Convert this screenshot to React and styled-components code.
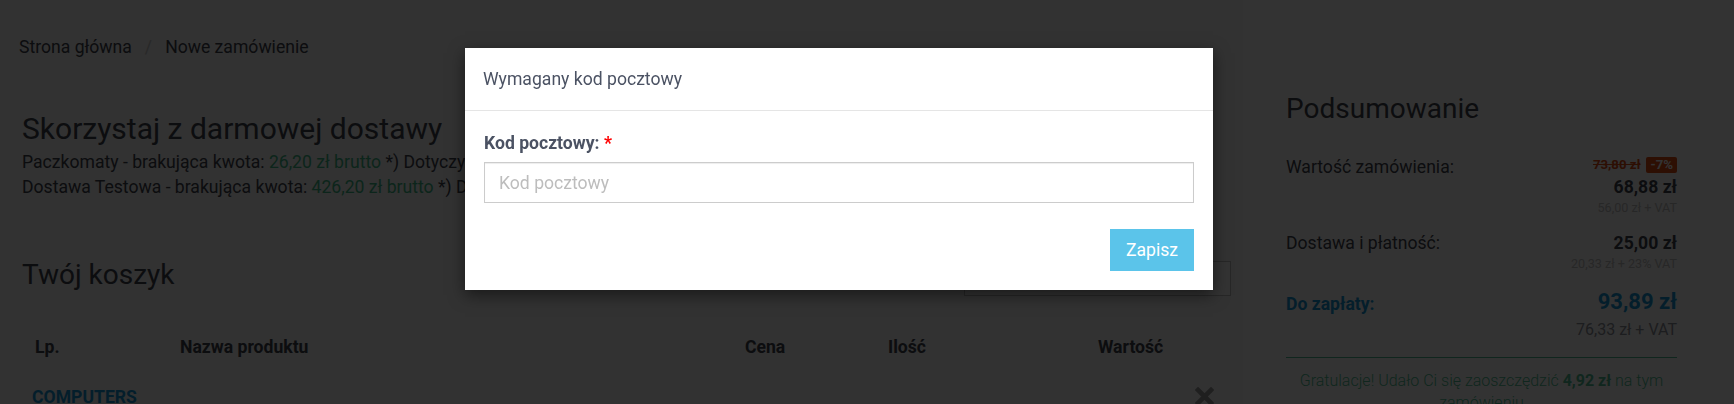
import React from "react";
import styled, { createGlobalStyle } from "styled-components";

const TEXT = "#3f434d";
const BLUE = "#1597d6";
const GREEN = "#3fb987";

const GlobalStyle = createGlobalStyle`
  * { box-sizing: border-box; }
  html, body { margin: 0; padding: 0; background: #fff; }
  body {
    font-family: Roboto, "Liberation Sans", Arial, sans-serif;
    font-size: 17.6px;
    color: ${TEXT};
    overflow: hidden;
  }
`;

const Page = styled.div`
  display: grid;
  grid-template-columns: 1243px 1fr;
  min-height: 404px;
`;

const Main = styled.main`
  background: #f8f8f8;
  padding: 35px 12px 0 22px;
  min-width: 0;
`;

const Breadcrumb = styled.nav`
  display: flex;
  align-items: center;
  line-height: 24px;
  margin-left: -3px;
  color: ${TEXT};
`;

const CrumbSep = styled.span`
  color: #c8c8c8;
  padding: 0 13px;
`;

const PromoTitle = styled.h2`
  margin: 52px 0 3px;
  font-size: 30px;
  line-height: 36px;
  font-weight: 400;
  color: ${TEXT};
`;

const PromoLine = styled.p`
  margin: 0;
  line-height: 25px;
  white-space: nowrap;
`;

const Amount = styled.span`
  color: ${GREEN};
`;

const CartHead = styled.div`
  display: flex;
  justify-content: space-between;
  align-items: flex-start;
  margin-top: 58px;
`;

const CartTitle = styled.h2`
  margin: 0;
  font-size: 28px;
  line-height: 34px;
  font-weight: 400;
  color: ${TEXT};
`;

const CodeInput = styled.input`
  width: 267px;
  height: 35px;
  margin-top: 3px;
  border: 1px solid #c4c4c4;
  background: #fff;
  font: inherit;
`;

const CartTable = styled.div`
  display: grid;
  grid-template-columns: 145px 565px 143px 210px 1fr;
  margin-top: 31px;
`;

const Th = styled.div`
  padding: 8px 13px;
  font-weight: 700;
  line-height: 24px;
  color: ${TEXT};
`;

const CategoryRow = styled.div`
  grid-column: 1 / -1;
  display: flex;
  justify-content: space-between;
  align-items: flex-start;
  padding: 18px 17px 0 10px;
`;

const Category = styled.span`
  font-weight: 700;
  line-height: 24px;
  color: ${BLUE};
  text-transform: uppercase;
`;

const RemoveButton = styled.button`
  margin-top: 2px;
  padding: 0;
  border: 0;
  background: none;
  width: 19px;
  height: 19px;
  display: block;
  color: #9a9a9a;
`;

const Summary = styled.aside`
  background: #fff;
  padding: 92px 57px 0 43px;
`;

const SummaryTitle = styled.h2`
  margin: 0 0 29px;
  font-size: 28px;
  line-height: 34px;
  font-weight: 400;
  color: ${TEXT};
`;

const SumRow = styled.div`
  display: flex;
  justify-content: space-between;
  align-items: flex-start;
  margin-bottom: 14px;
`;

const SumLabel = styled.span`
  line-height: 24px;
  margin-top: ${(p) => p.$offset || 0}px;
  font-weight: ${(p) => (p.$accent ? 700 : 400)};
  color: ${(p) => (p.$accent ? BLUE : TEXT)};
`;

const SumValues = styled.div`
  display: flex;
  flex-direction: column;
  align-items: flex-end;
  text-align: right;
`;

const OldPriceLine = styled.div`
  line-height: 20px;
  font-size: 13.2px;
  font-weight: 700;
`;

const OldPrice = styled.s`
  color: #e04a12;
  margin-right: 6px;
`;

const Badge = styled.span`
  display: inline-block;
  line-height: 16px;
  padding: 0 4px;
  border-radius: 2px;
  background: #e04a12;
  color: #fff;
`;

const Price = styled.div`
  font-weight: 700;
  font-size: ${(p) => p.$size || 17.6}px;
  line-height: ${(p) => p.$lh || 24}px;
  color: ${(p) => (p.$accent ? BLUE : TEXT)};
`;

const Net = styled.div`
  font-size: ${(p) => p.$size || 12.6}px;
  line-height: ${(p) => p.$lh || 18}px;
  color: ${(p) => p.$color || "#c2c2c2"};
`;

const Divider = styled.hr`
  margin: 0 0 12px;
  border: 0;
  border-top: 1px solid #4fbf95;
`;

const Congrats = styled.p`
  margin: 0;
  text-align: center;
  font-size: 16px;
  line-height: 22px;
  color: #4fbf95;
  font-weight: 300;

  strong {
    font-weight: 700;
  }
`;

const Backdrop = styled.div`
  position: fixed;
  inset: 0;
  background: rgba(0, 0, 0, 0.8);
`;

const Dialog = styled.div`
  position: fixed;
  top: 48px;
  left: 465px;
  width: 748px;
  background: #fff;
  box-shadow: 0 5px 15px rgba(0, 0, 0, 0.5);
  color: #4b5263;
`;

const DialogHeader = styled.div`
  padding: 19px 19px 19px 18px;
  border-bottom: 1px solid #e5e5e5;
`;

const DialogTitle = styled.h4`
  margin: 0;
  font-size: 17.6px;
  font-weight: 400;
  line-height: 24px;
`;

const DialogBody = styled.form`
  display: flex;
  flex-direction: column;
  padding: 20px 19px 19px;
`;

const FieldLabel = styled.label`
  font-weight: 700;
  line-height: 24px;
  margin-bottom: 7px;
`;

const Required = styled.span`
  color: #ff0000;
`;

const TextInput = styled.input`
  height: 41px;
  padding: 0 14px;
  border: 1px solid #cccccc;
  box-shadow: inset 0 1px 1px rgba(0, 0, 0, 0.075);
  font: inherit;
  color: #4b5263;
  outline: none;

  &::placeholder {
    color: #bdbdbd;
  }
`;

const DialogFooter = styled.div`
  display: flex;
  justify-content: flex-end;
  margin-top: 26px;
`;

const SaveButton = styled.button`
  height: 42px;
  padding: 0 16px;
  border: 0;
  background: #5bc4ea;
  color: #fff;
  font: inherit;
  line-height: 24px;
  cursor: pointer;
`;

const CrossIcon = () => (
  <svg width="19" height="19" viewBox="0 0 19 19" aria-hidden="true">
    <path
      d="M3 3 L16 16 M16 3 L3 16"
      stroke="currentColor"
      strokeWidth="4.6"
      strokeLinecap="square"
      fill="none"
    />
  </svg>
);

export default function App() {
  return (
    <>
      <GlobalStyle />
      <Page>
        <Main>
          <Breadcrumb>
            <span>Strona główna</span>
            <CrumbSep>/</CrumbSep>
            <span>Nowe zamówienie</span>
          </Breadcrumb>

          <PromoTitle>Skorzystaj z darmowej dostawy</PromoTitle>
          <PromoLine>
            Paczkomaty - brakująca kwota: <Amount>26,20 zł brutto</Amount> *) Dotyczy tylko
            przesyłek krajowych
          </PromoLine>
          <PromoLine>
            Dostawa Testowa - brakująca kwota: <Amount>426,20 zł brutto</Amount> *) Dotyczy tylko
            przesyłek krajowych
          </PromoLine>

          <CartHead>
            <CartTitle>Twój koszyk</CartTitle>
            <CodeInput aria-label="Kod rabatowy" />
          </CartHead>

          <CartTable>
            <Th>Lp.</Th>
            <Th>Nazwa produktu</Th>
            <Th>Cena</Th>
            <Th>Ilość</Th>
            <Th>Wartość</Th>
            <CategoryRow>
              <Category>Computers</Category>
              <RemoveButton aria-label="Usuń">
                <CrossIcon />
              </RemoveButton>
            </CategoryRow>
          </CartTable>
        </Main>

        <Summary>
          <SummaryTitle>Podsumowanie</SummaryTitle>

          <SumRow>
            <SumLabel>Wartość zamówienia:</SumLabel>
            <SumValues>
              <OldPriceLine>
                <OldPrice>73,80 zł</OldPrice>
                <Badge>-7%</Badge>
              </OldPriceLine>
              <Price>68,88 zł</Price>
              <Net>56,00 zł + VAT</Net>
            </SumValues>
          </SumRow>

          <SumRow>
            <SumLabel>Dostawa i płatność:</SumLabel>
            <SumValues>
              <Price>25,00 zł</Price>
              <Net>20,33 zł + 23% VAT</Net>
            </SumValues>
          </SumRow>

          <SumRow>
            <SumLabel $accent $offset={5}>
              Do zapłaty:
            </SumLabel>
            <SumValues>
              <Price $accent $size={22} $lh={30}>
                93,89 zł
              </Price>
              <Net $size={16} $lh={26} $color="#8d9099">
                76,33 zł + VAT
              </Net>
            </SumValues>
          </SumRow>

          <Divider />
          <Congrats>
            Gratulacje! Udało Ci się zaoszczędzić <strong>4,92 zł</strong> na tym zamówieniu
          </Congrats>
        </Summary>
      </Page>

      <Backdrop />
      <Dialog role="dialog" aria-modal="true">
        <DialogHeader>
          <DialogTitle>Wymagany kod pocztowy</DialogTitle>
        </DialogHeader>
        <DialogBody onSubmit={(e) => e.preventDefault()}>
          <FieldLabel htmlFor="postcode">
            Kod pocztowy: <Required>*</Required>
          </FieldLabel>
          <TextInput id="postcode" placeholder="Kod pocztowy" />
          <DialogFooter>
            <SaveButton type="submit">Zapisz</SaveButton>
          </DialogFooter>
        </DialogBody>
      </Dialog>
    </>
  );
}
